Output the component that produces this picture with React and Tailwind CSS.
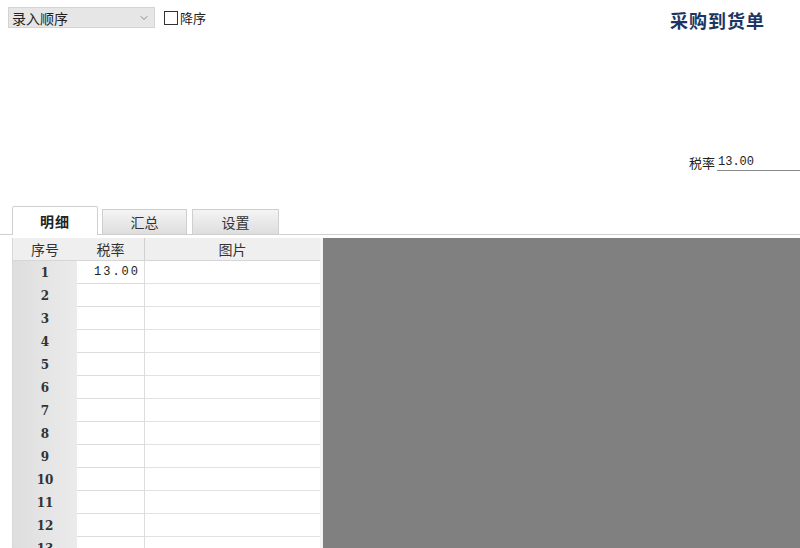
import { ChevronDown } from 'lucide-react'

const rows = Array.from({ length: 13 }, (_, i) => i + 1)

const cn = { fontFamily: '"Noto Sans CJK SC", "Noto Sans", sans-serif' }
const mono = { fontFamily: '"Liberation Mono", "DejaVu Sans Mono", monospace' }

export default function App() {
  return (
    <div className="w-[800px] h-[548px] bg-white overflow-hidden text-[13px] text-[#222]" style={cn}>
      {/* top bar */}
      <div className="flex justify-between items-start pl-2 pt-[7px] pr-[35px]">
        <div className="flex items-center gap-[9px]">
          <div className="w-[147px] h-[21px] bg-[#e6e6e6] border border-[#d4d4d4] flex items-center justify-between pl-[3px] pr-[4px]">
            <span className="leading-none text-[14px]">录入顺序</span>
            <ChevronDown className="w-[12px] h-[12px] text-[#7a7a7a]" strokeWidth={1.75} />
          </div>
          <div className="flex items-center gap-[2px]">
            <span className="w-[14px] h-[14px] border border-[#333] bg-white" />
            <span className="leading-none">降序</span>
          </div>
        </div>
        <div className="text-[18px] font-bold text-[#1d3563] tracking-[1px] mt-[2px] leading-[22px]">采购到货单</div>
      </div>

      {/* tax rate */}
      <div className="flex justify-end items-end mt-[122px] h-[18px]">
        <span className="leading-none mb-[2px]">税率</span>
        <div className="w-[83px] ml-[2px] border-b border-[#888] pl-[1px] text-[12px] leading-[14px] pb-[1px]" style={mono}>
          13.00
        </div>
      </div>

      {/* tabs */}
      <div className="flex items-end mt-[36px] h-[28px] border-b border-[#cfcfcf]">
        <div className="w-3 shrink-0" />
        <div className="w-[86px] h-[29px] -mb-px bg-white border border-b-0 border-[#cfcfcf] rounded-t-[2px] flex items-center justify-center font-bold text-[14px] tracking-[1px]">
          明细
        </div>
        <div className="w-[85px] h-[25px] ml-[4px] bg-gradient-to-b from-[#f4f4f4] to-[#dedede] border border-b-0 border-[#cfcfcf] flex items-center justify-center text-[14px] text-[#333]">
          汇总
        </div>
        <div className="w-[87px] h-[25px] ml-[5px] bg-gradient-to-b from-[#f4f4f4] to-[#dedede] border border-b-0 border-[#cfcfcf] flex items-center justify-center text-[14px] text-[#333]">
          设置
        </div>
      </div>

      {/* grid + panel */}
      <div className="flex mt-[3px] pl-3">
        <div className="w-[308px] shrink-0 border-l border-[#d8d8d8]">
          <div className="flex h-[23px] bg-[#efefef] border-b border-[#d6d6d6] text-[14px] text-[#333]">
            <div className="w-[64px] flex items-center justify-center">序号</div>
            <div className="w-[68px] flex items-center justify-center border-r border-[#d0d0d0]">税率</div>
            <div className="flex-1 flex items-center justify-center">图片</div>
          </div>
          {rows.map((n) => (
            <div key={n} className="flex h-[23px]">
              <div className="w-[64px] bg-gradient-to-r from-[#dedede] to-[#ebebeb] flex items-center justify-center text-[12px] font-semibold text-[#333]" style={{ fontFamily: '"DejaVu Serif", serif' }}>
                {n}
              </div>
              <div className="w-[68px] border-r border-b border-[#dcdcdc] flex items-center justify-end pr-[4px] text-[12px] tracking-[2px]" style={mono}>
                {n === 1 ? '13.00' : ''}
              </div>
              <div className="flex-1 border-b border-[#e2e2e2]" />
            </div>
          ))}
        </div>
        <div className="w-[3px] shrink-0 bg-[#f4f4f4]" />
        <div className="flex-1 h-[320px] bg-[#808080]" />
      </div>
    </div>
  )
}
